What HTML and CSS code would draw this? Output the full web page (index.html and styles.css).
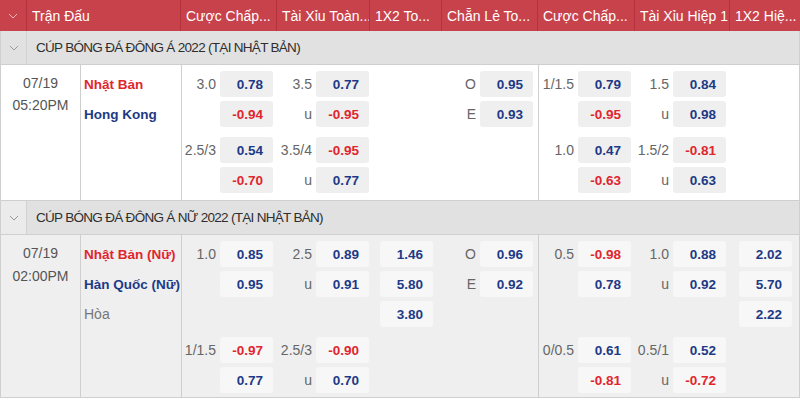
FILE: index.html
```html
<!DOCTYPE html>
<html lang="vi">
<head>
<meta charset="utf-8">
<title>Kèo bóng đá</title>
<link rel="stylesheet" href="styles.css">
</head>
<body>
<div class="board">
  <div class="head">
    <div class="hcell chev"><svg width="10" height="6" viewBox="0 0 10 6"><polyline points="1,1 5,5 9,1" fill="none" stroke="#f1b9bd" stroke-width="1"/></svg></div>
    <div class="hcell">Trận Đấu</div>
    <div class="hcell">Cược Chấp...</div>
    <div class="hcell">Tài Xỉu Toàn...</div>
    <div class="hcell">1X2 To...</div>
    <div class="hcell">Chẵn Lẻ To...</div>
    <div class="hcell">Cược Chấp...</div>
    <div class="hcell">Tài Xỉu Hiệp 1</div>
    <div class="hcell last">1X2 Hiệ...</div>
  </div>

  <div class="league">
    <div class="lchev"><svg width="10" height="6" viewBox="0 0 10 6"><polyline points="1,1 5,5 9,1" fill="none" stroke="#9a9a9a" stroke-width="1"/></svg></div>
    <div class="ltitle">CÚP BÓNG ĐÁ ĐÔNG Á 2022 (TẠI NHẬT BẢN)</div>
  </div>

  <div class="match">
    <div class="date"><div>07/19</div><div>05:20PM</div></div>
    <div class="teams">
      <div class="line home">Nhật Bản</div>
      <div class="line away">Hong Kong</div>
    </div>
    <div class="col">
      <div class="grp">
        <div class="line"><span class="lbl">3.0</span><span class="odd b">0.78</span></div>
        <div class="line"><span class="lbl"></span><span class="odd r">-0.94</span></div>
      </div>
      <div class="grp">
        <div class="line"><span class="lbl">2.5/3</span><span class="odd b">0.54</span></div>
        <div class="line"><span class="lbl"></span><span class="odd r">-0.70</span></div>
      </div>
    </div>
    <div class="col">
      <div class="grp">
        <div class="line"><span class="lbl">3.5</span><span class="odd b">0.77</span></div>
        <div class="line"><span class="lbl">u</span><span class="odd r">-0.95</span></div>
      </div>
      <div class="grp">
        <div class="line"><span class="lbl">3.5/4</span><span class="odd r">-0.95</span></div>
        <div class="line"><span class="lbl">u</span><span class="odd b">0.77</span></div>
      </div>
    </div>
    <div class="col wide"></div>
    <div class="col split">
      <div class="grp">
        <div class="line"><span class="lbl">O</span><span class="odd b">0.95</span></div>
        <div class="line"><span class="lbl">E</span><span class="odd b">0.93</span></div>
      </div>
    </div>
    <div class="col">
      <div class="grp">
        <div class="line"><span class="lbl">1/1.5</span><span class="odd b">0.79</span></div>
        <div class="line"><span class="lbl"></span><span class="odd r">-0.95</span></div>
      </div>
      <div class="grp">
        <div class="line"><span class="lbl">1.0</span><span class="odd b">0.47</span></div>
        <div class="line"><span class="lbl"></span><span class="odd r">-0.63</span></div>
      </div>
    </div>
    <div class="col">
      <div class="grp">
        <div class="line"><span class="lbl">1.5</span><span class="odd b">0.84</span></div>
        <div class="line"><span class="lbl">u</span><span class="odd b">0.98</span></div>
      </div>
      <div class="grp">
        <div class="line"><span class="lbl">1.5/2</span><span class="odd r">-0.81</span></div>
        <div class="line"><span class="lbl">u</span><span class="odd b">0.63</span></div>
      </div>
    </div>
    <div class="col wide last"></div>
  </div>

  <div class="league">
    <div class="lchev light"><svg width="10" height="6" viewBox="0 0 10 6"><polyline points="1,1 5,5 9,1" fill="none" stroke="#9a9a9a" stroke-width="1"/></svg></div>
    <div class="ltitle">CÚP BÓNG ĐÁ ĐÔNG Á NỮ 2022 (TẠI NHẬT BẢN)</div>
  </div>

  <div class="match alt">
    <div class="date"><div>07/19</div><div>02:00PM</div></div>
    <div class="teams">
      <div class="line home">Nhật Bản (Nữ)</div>
      <div class="line away">Hàn Quốc (Nữ)</div>
      <div class="line draw">Hòa</div>
    </div>
    <div class="col">
      <div class="grp">
        <div class="line"><span class="lbl">1.0</span><span class="odd b">0.85</span></div>
        <div class="line"><span class="lbl"></span><span class="odd b">0.95</span></div>
        <div class="line"></div>
      </div>
      <div class="grp">
        <div class="line"><span class="lbl">1/1.5</span><span class="odd r">-0.97</span></div>
        <div class="line"><span class="lbl"></span><span class="odd b">0.77</span></div>
      </div>
    </div>
    <div class="col">
      <div class="grp">
        <div class="line"><span class="lbl">2.5</span><span class="odd b">0.89</span></div>
        <div class="line"><span class="lbl">u</span><span class="odd b">0.91</span></div>
        <div class="line"></div>
      </div>
      <div class="grp">
        <div class="line"><span class="lbl">2.5/3</span><span class="odd r">-0.90</span></div>
        <div class="line"><span class="lbl">u</span><span class="odd b">0.70</span></div>
      </div>
    </div>
    <div class="col wide">
      <div class="grp">
        <div class="line"><span class="odd b">1.46</span></div>
        <div class="line"><span class="odd b">5.80</span></div>
        <div class="line"><span class="odd b">3.80</span></div>
      </div>
    </div>
    <div class="col split">
      <div class="grp">
        <div class="line"><span class="lbl">O</span><span class="odd b">0.96</span></div>
        <div class="line"><span class="lbl">E</span><span class="odd b">0.92</span></div>
      </div>
    </div>
    <div class="col">
      <div class="grp">
        <div class="line"><span class="lbl">0.5</span><span class="odd r">-0.98</span></div>
        <div class="line"><span class="lbl"></span><span class="odd b">0.78</span></div>
        <div class="line"></div>
      </div>
      <div class="grp">
        <div class="line"><span class="lbl">0/0.5</span><span class="odd b">0.61</span></div>
        <div class="line"><span class="lbl"></span><span class="odd r">-0.81</span></div>
      </div>
    </div>
    <div class="col">
      <div class="grp">
        <div class="line"><span class="lbl">1.0</span><span class="odd b">0.88</span></div>
        <div class="line"><span class="lbl">u</span><span class="odd b">0.92</span></div>
        <div class="line"></div>
      </div>
      <div class="grp">
        <div class="line"><span class="lbl">0.5/1</span><span class="odd b">0.52</span></div>
        <div class="line"><span class="lbl">u</span><span class="odd r">-0.72</span></div>
      </div>
    </div>
    <div class="col wide last">
      <div class="grp">
        <div class="line"><span class="odd b">2.02</span></div>
        <div class="line"><span class="odd b">5.70</span></div>
        <div class="line"><span class="odd b">2.22</span></div>
      </div>
    </div>
  </div>
</div>
</body>
</html>
```

FILE: styles.css
```css
* { box-sizing: border-box; }
html, body { margin: 0; padding: 0; background: #ffffff; }
body {
  font-family: "Liberation Sans", Arial, sans-serif;
  font-size: 14px;
  color: #333;
  width: 800px;
  height: 400px;
  overflow: hidden;
}
.board { width: 800px; }

.head {
  display: grid;
  grid-template-columns: 27px 154px 96px 93px 72px 96px 97px 95px 70px;
  height: 31px;
  background: #c8424b;
}
.hcell {
  display: flex;
  align-items: center;
  padding-left: 5px;
  color: #fff;
  font-size: 14px;
  white-space: nowrap;
  overflow: hidden;
  border-right: 1px solid #b2333c;
}
.hcell.chev { justify-content: center; padding-left: 0; }
.hcell.last { border-right: none; }

.league {
  display: flex;
  height: 34px;
  background: #e1e1e1;
  border-bottom: 1px solid #cfcfcf;
  border-left: 1px solid #cfcfcf;
  border-right: 1px solid #cfcfcf;
}
.lchev {
  width: 26px;
  display: flex;
  align-items: center;
  justify-content: center;
  border-right: 1px solid #d2d2d2;
}
.lchev.light { background: #ebebeb; }
.ltitle {
  display: flex;
  align-items: center;
  padding-left: 9px;
  font-size: 13.5px;
  letter-spacing: -0.7px;
  color: #2e2e2e;
  white-space: nowrap;
}

.match {
  display: grid;
  grid-template-columns: 80px 101px 96px 96px 69px 96px 97px 95px 70px;
  background: #fff;
  border-bottom: 1px solid #cfcfcf;
  border-left: 1px solid #cfcfcf;
  border-right: 1px solid #cfcfcf;
}
.match.alt { background: #efefef; }

.date {
  padding-top: 7px;
  text-align: center;
  color: #555;
  font-size: 14px;
  line-height: 22px;
  border-right: 1px solid #cfcfcf;
}
.match.alt .date { line-height: 23px; }

.teams {
  display: flex;
  flex-direction: column;
  gap: 4px;
  padding: 6px 0 0 3px;
  border-right: 1px solid #cfcfcf;
}
.teams .line {
  height: 26px;
  display: flex;
  align-items: center;
  font-weight: bold;
  font-size: 13.5px;
  white-space: nowrap;
}
.home { color: #e0262d; }
.away { color: #1d3a86; }
.teams .draw { color: #777; font-weight: normal; font-size: 14px; }

.col {
  display: flex;
  flex-direction: column;
  gap: 10px;
  padding: 6px 5px 7px 0;
}
.match.alt .col { padding-bottom: 4px; }
.col.wide { padding-right: 10px; }
.col.split { border-right: 1px solid #cfcfcf; }
.col.last { padding-right: 9px; }

.grp { display: flex; flex-direction: column; gap: 4px; }
.col .line {
  height: 26px;
  display: flex;
  align-items: center;
  justify-content: flex-end;
  gap: 4px;
}
.lbl {
  color: #666;
  font-size: 14px;
  white-space: nowrap;
}
.odd {
  width: 53px;
  height: 26px;
  display: flex;
  align-items: center;
  justify-content: flex-end;
  padding-right: 10px;
  background: #efefef;
  border-radius: 3px;
  font-weight: bold;
  font-size: 13.5px;
}
.match.alt .odd { background: #f7f7f7; }
.odd.b { color: #1d3a86; }
.odd.r { color: #e0262d; }
```
